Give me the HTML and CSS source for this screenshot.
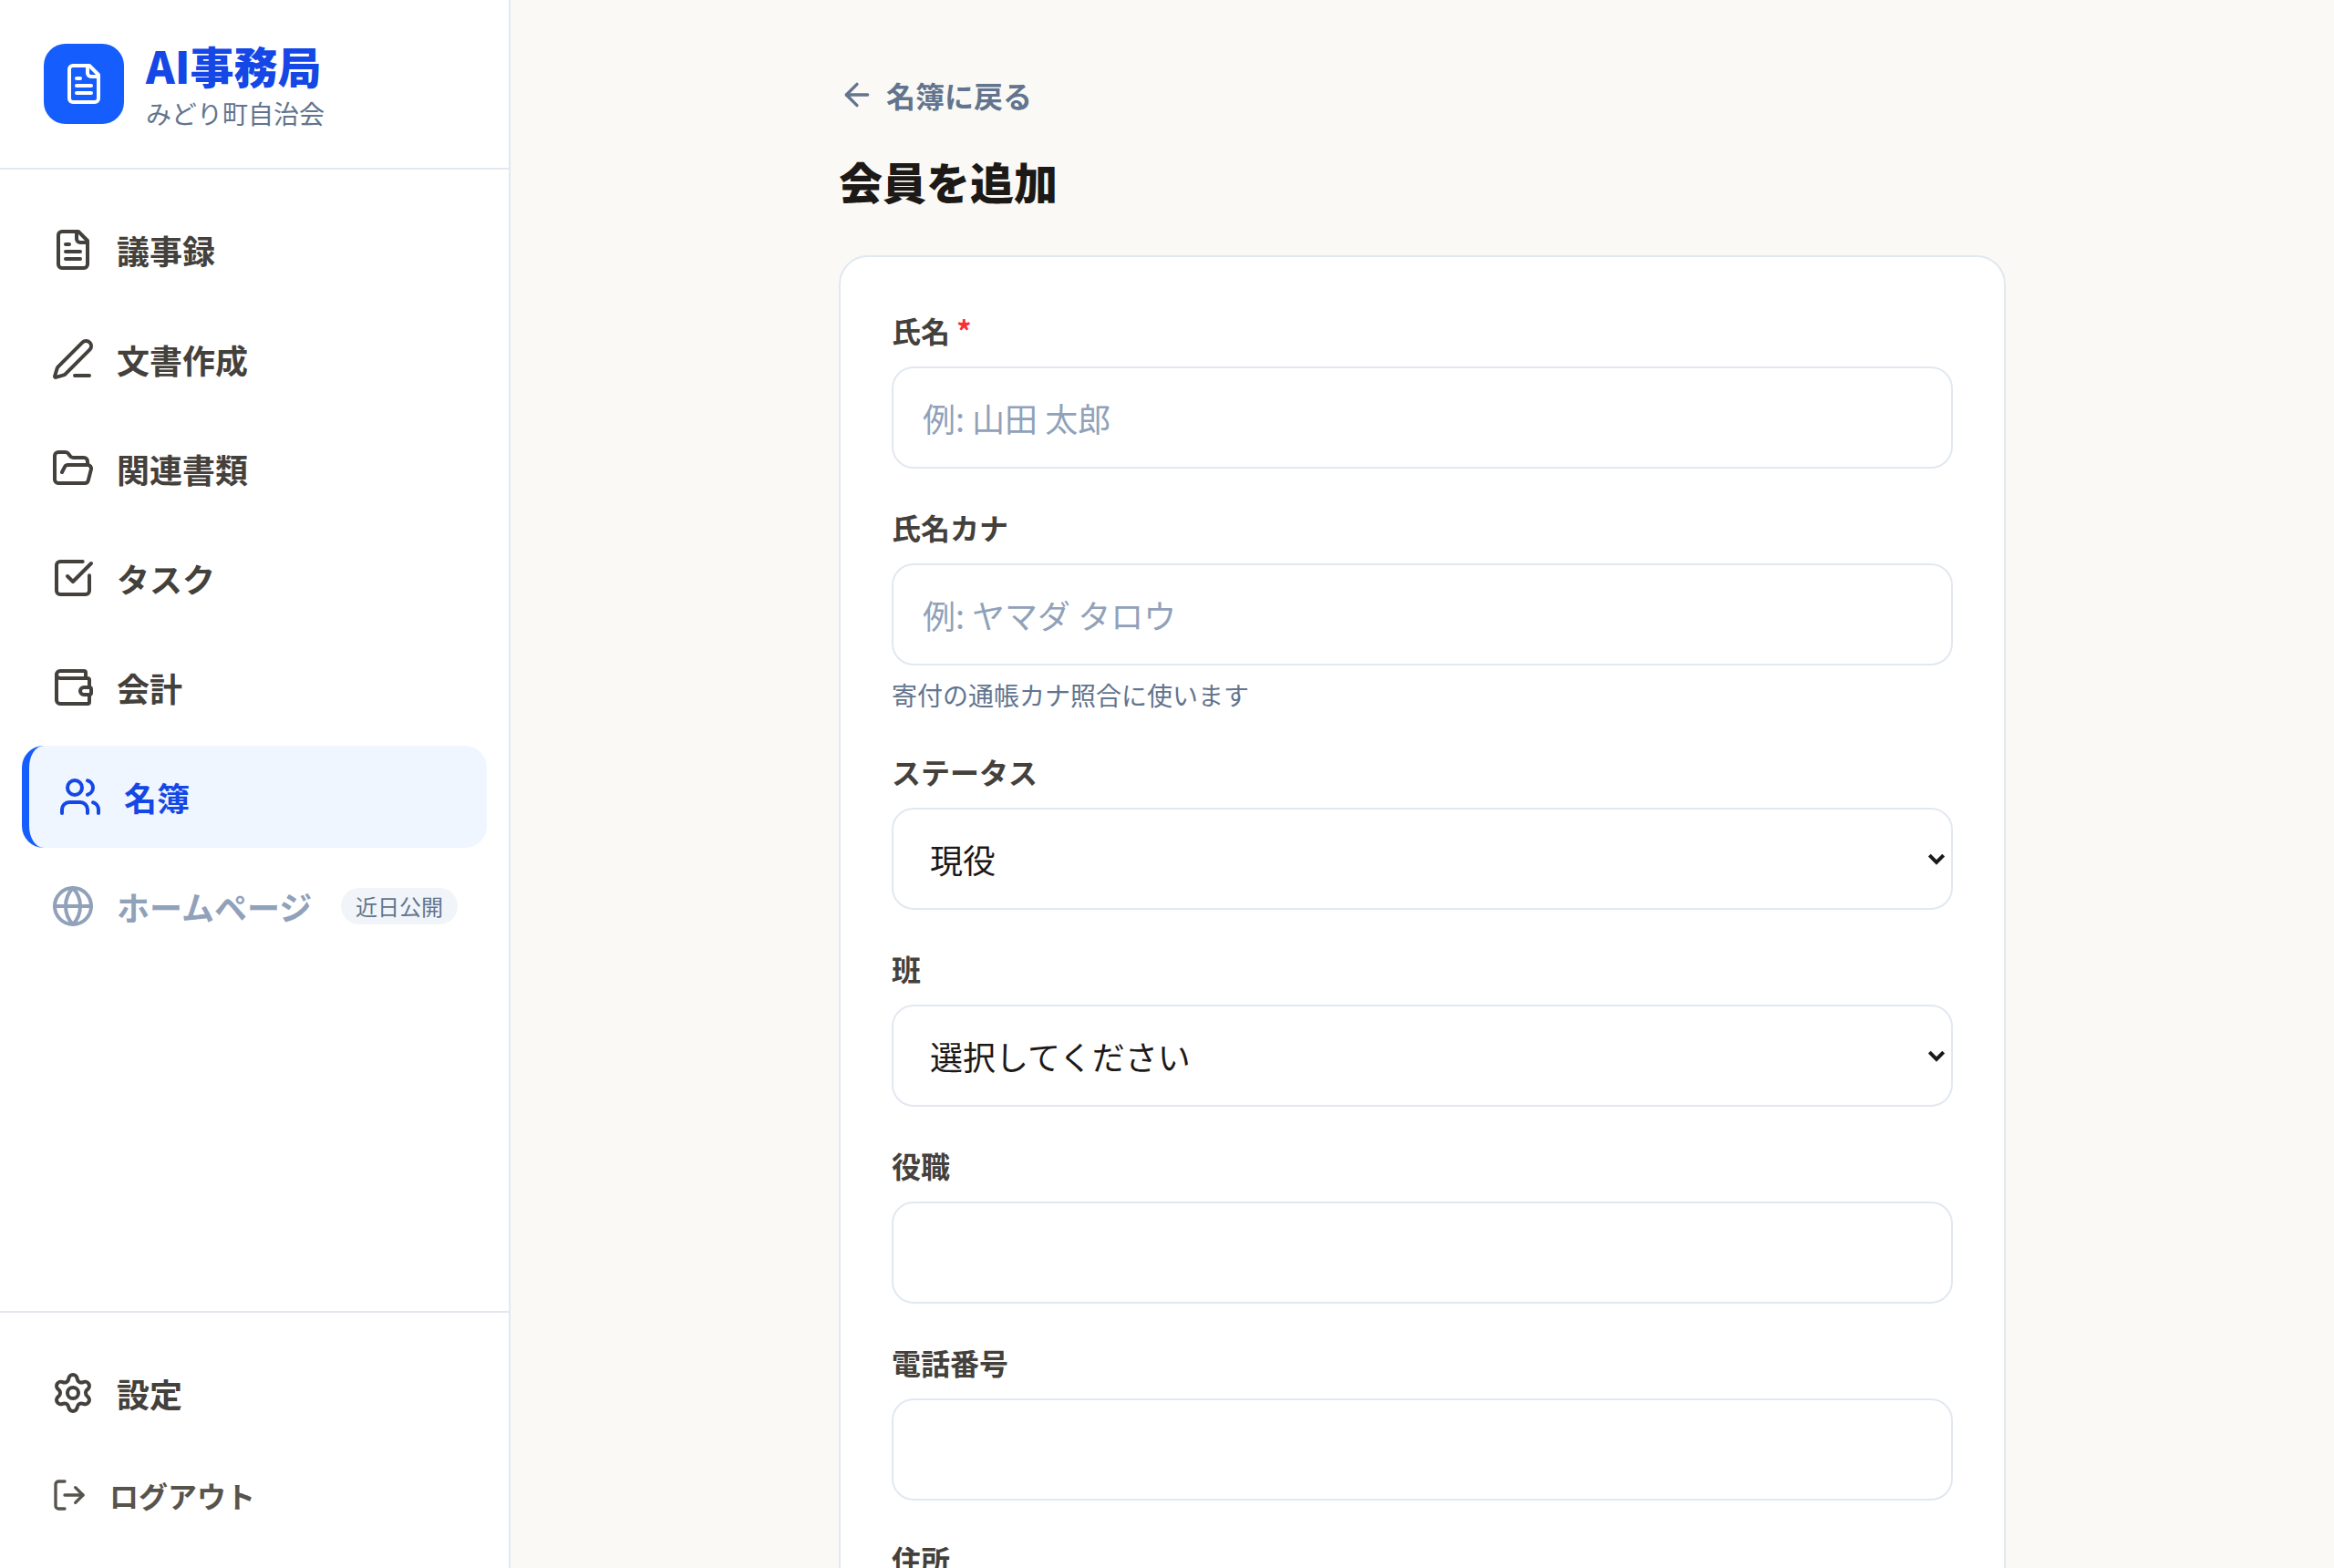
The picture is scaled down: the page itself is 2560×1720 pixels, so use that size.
FILE: index.html
```
<!DOCTYPE html>
<html lang="ja">

<head>
    <meta charset="UTF-8">
    <meta name="viewport" content="width=device-width, initial-scale=1.0">
    <title>会員を追加</title>
    <link rel="stylesheet" href="styles.css">
</head>

<body>
    <aside class="sidebar">
        <div class="brand">
            <div class="brand-logo">
                <svg class="icon" viewBox="0 0 24 24"><path d="M15 2H6a2 2 0 0 0-2 2v16a2 2 0 0 0 2 2h12a2 2 0 0 0 2-2V7Z"/><path d="M14 2v4a2 2 0 0 0 2 2h4"/><path d="M10 9H8"/><path d="M16 13H8"/><path d="M16 17H8"/></svg>
            </div>
            <div class="brand-text">
                <p class="brand-name">AI事務局</p>
                <p class="brand-org">みどり町自治会</p>
            </div>
        </div>

        <nav class="nav">
            <a class="nav-item">
                <svg class="icon" viewBox="0 0 24 24"><path d="M15 2H6a2 2 0 0 0-2 2v16a2 2 0 0 0 2 2h12a2 2 0 0 0 2-2V7Z"/><path d="M14 2v4a2 2 0 0 0 2 2h4"/><path d="M10 9H8"/><path d="M16 13H8"/><path d="M16 17H8"/></svg>
                <span>議事録</span>
            </a>
            <a class="nav-item">
                <svg class="icon" viewBox="0 0 24 24"><path d="M13 21h8"/><path d="M21.174 6.812a1 1 0 0 0-3.986-3.987L3.842 16.174a2 2 0 0 0-.5.83l-1.321 4.352a.5.5 0 0 0 .623.622l4.353-1.32a2 2 0 0 0 .83-.497z"/></svg>
                <span>文書作成</span>
            </a>
            <a class="nav-item">
                <svg class="icon" viewBox="0 0 24 24"><path d="m6 14 1.5-2.9A2 2 0 0 1 9.24 10H20a2 2 0 0 1 1.94 2.5l-1.54 6a2 2 0 0 1-1.95 1.5H4a2 2 0 0 1-2-2V5a2 2 0 0 1 2-2h3.9a2 2 0 0 1 1.69.9l.81 1.2a2 2 0 0 0 1.67.9H18a2 2 0 0 1 2 2v2"/></svg>
                <span>関連書類</span>
            </a>
            <a class="nav-item">
                <svg class="icon" viewBox="0 0 24 24"><path d="M21 10.656V19a2 2 0 0 1-2 2H5a2 2 0 0 1-2-2V5a2 2 0 0 1 2-2h12.344"/><path d="m9 11 3 3L22 4"/></svg>
                <span>タスク</span>
            </a>
            <a class="nav-item">
                <svg class="icon" viewBox="0 0 24 24"><path d="M19 7V4a1 1 0 0 0-1-1H5a2 2 0 0 0 0 4h15a1 1 0 0 1 1 1v4h-3a2 2 0 0 0 0 4h3a1 1 0 0 0 1-1v-2a1 1 0 0 0-1-1"/><path d="M3 5v14a2 2 0 0 0 2 2h15a1 1 0 0 0 1-1v-4"/></svg>
                <span>会計</span>
            </a>
            <a class="nav-item active">
                <svg class="icon" viewBox="0 0 24 24"><path d="M16 21v-2a4 4 0 0 0-4-4H6a4 4 0 0 0-4 4v2"/><path d="M16 3.128a4 4 0 0 1 0 7.744"/><path d="M22 21v-2a4 4 0 0 0-3-3.87"/><circle cx="9" cy="7" r="4"/></svg>
                <span>名簿</span>
            </a>
            <a class="nav-item disabled">
                <svg class="icon" viewBox="0 0 24 24"><circle cx="12" cy="12" r="10"/><path d="M12 2a14.5 14.5 0 0 0 0 20 14.5 14.5 0 0 0 0-20"/><path d="M2 12h20"/></svg>
                <span>ホームページ</span>
                <span class="badge">近日公開</span>
            </a>
        </nav>

        <div class="sidebar-footer">
            <a class="nav-item">
                <svg class="icon" viewBox="0 0 24 24"><path d="M9.671 4.136a2.34 2.34 0 0 1 4.659 0 2.34 2.34 0 0 0 3.319 1.915 2.34 2.34 0 0 1 2.33 4.033 2.34 2.34 0 0 0 0 3.831 2.34 2.34 0 0 1-2.33 4.033 2.34 2.34 0 0 0-3.319 1.915 2.34 2.34 0 0 1-4.659 0 2.34 2.34 0 0 0-3.32-1.915 2.34 2.34 0 0 1-2.33-4.033 2.34 2.34 0 0 0 0-3.831A2.34 2.34 0 0 1 6.35 6.051a2.34 2.34 0 0 0 3.319-1.915"/><circle cx="12" cy="12" r="3"/></svg>
                <span>設定</span>
            </a>
            <a class="nav-item logout">
                <svg class="icon" viewBox="0 0 24 24"><path d="m16 17 5-5-5-5"/><path d="M21 12H9"/><path d="M9 21H5a2 2 0 0 1-2-2V5a2 2 0 0 1 2-2h4"/></svg>
                <span>ログアウト</span>
            </a>
        </div>
    </aside>

    <main class="main">
        <div class="container">
            <a class="back-link">
                <svg class="icon" viewBox="0 0 24 24"><path d="m12 19-7-7 7-7"/><path d="M19 12H5"/></svg>
                <span>名簿に戻る</span>
            </a>
            <h1>会員を追加</h1>

            <form class="card">
                <div class="field">
                    <label for="name">氏名 <span class="required">*</span></label>
                    <input type="text" id="name" placeholder="例: 山田 太郎">
                </div>
                <div class="field">
                    <label for="kana">氏名カナ</label>
                    <input type="text" id="kana" placeholder="例: ヤマダ タロウ">
                    <p class="help">寄付の通帳カナ照合に使います</p>
                </div>
                <div class="field">
                    <label for="status">ステータス</label>
                    <div class="select">
                        <select id="status">
                            <option>現役</option>
                        </select>
                        <svg class="arrow" viewBox="0 0 20 14"><path d="M2.3 3.1 10 10.8l7.7-7.7"/></svg>
                    </div>
                </div>
                <div class="field">
                    <label for="group">班</label>
                    <div class="select">
                        <select id="group">
                            <option>選択してください</option>
                        </select>
                        <svg class="arrow" viewBox="0 0 20 14"><path d="M2.3 3.1 10 10.8l7.7-7.7"/></svg>
                    </div>
                </div>
                <div class="field">
                    <label for="role">役職</label>
                    <input type="text" id="role">
                </div>
                <div class="field">
                    <label for="phone">電話番号</label>
                    <input type="text" id="phone">
                </div>
                <div class="field">
                    <label for="address">住所</label>
                    <input type="text" id="address">
                </div>
            </form>
        </div>
    </main>
</body>

</html>
```
FILE: styles.css
```
* {
    box-sizing: border-box;
    margin: 0;
    padding: 0;
}

body {
    display: flex;
    height: 100vh;
    overflow: hidden;
    font-family: "Noto Sans CJK JP", sans-serif;
    font-size: 36px;
    line-height: 1.5;
    color: #1c1917;
    background-color: #faf9f5;
}

.icon {
    width: 48px;
    height: 48px;
    flex-shrink: 0;
    fill: none;
    stroke: currentColor;
    stroke-width: 2;
    stroke-linecap: round;
    stroke-linejoin: round;
}

/* sidebar */
.sidebar {
    display: flex;
    flex-direction: column;
    width: 560px;
    flex-shrink: 0;
    background-color: white;
    border-right: 2px solid #e2e8f0;
}

.brand {
    display: flex;
    align-items: center;
    gap: 24px;
    height: 186px;
    padding: 0 48px;
    border-bottom: 2px solid #e2e8f0;
}

.brand-logo {
    display: flex;
    align-items: center;
    justify-content: center;
    width: 88px;
    height: 88px;
    border-radius: 24px;
    color: white;
    background-color: #155dfc;
}

.brand-name {
    font-size: 48px;
    font-weight: 800;
    line-height: 64px;
    color: #1447e6;
}

.brand-org {
    font-size: 28px;
    line-height: 42px;
    color: #62748e;
}

.nav {
    display: flex;
    flex-direction: column;
    flex: 1;
    gap: 8px;
    padding: 32px 24px;
}

.nav-item {
    display: flex;
    align-items: center;
    gap: 24px;
    height: 112px;
    padding: 0 32px;
    border-radius: 24px;
    font-weight: 600;
    color: #44403b;
}

.nav-item.active {
    color: #1447e6;
    background-color: #eff6ff;
    border-left: 8px solid #155dfc;
}

.nav-item.disabled {
    color: #90a1b9;
}

.badge {
    margin-left: auto;
    padding: 0 16px;
    border-radius: 20px;
    font-size: 24px;
    font-weight: 400;
    line-height: 40px;
    color: #62748e;
    background-color: #f1f5f9;
}

.sidebar-footer {
    display: flex;
    flex-direction: column;
    gap: 8px;
    padding: 32px 24px;
    border-top: 2px solid #e2e8f0;
}

.logout {
    height: 96px;
    font-size: 32px;
    color: #57534d;
}

.logout .icon,
.back-link .icon {
    width: 40px;
    height: 40px;
}

/* main */
.main {
    flex: 1;
    padding-top: 64px;
}

.container {
    width: 1280px;
    margin: 0 auto;
}

.back-link {
    display: inline-flex;
    align-items: center;
    gap: 12px;
    height: 80px;
    font-size: 32px;
    font-weight: 600;
    color: #62748e;
    vertical-align: top;
}

h1 {
    margin: 24px 0 52px;
    font-size: 48px;
    font-weight: 800;
    line-height: 60px;
}

.card {
    display: flex;
    flex-direction: column;
    gap: 40px;
    padding: 56px;
    border: 2px solid #e2e8f0;
    border-radius: 32px;
    background-color: white;
}

label {
    display: block;
    margin-bottom: 16px;
    font-size: 32px;
    font-weight: 600;
    line-height: 48px;
    color: #44403b;
}

.required {
    color: #fb2c36;
}

input,
select {
    display: block;
    width: 100%;
    height: 112px;
    padding: 0 32px;
    border: 2px solid #e2e8f0;
    border-radius: 24px;
    font: inherit;
    color: #1c1917;
    background-color: white;
}

input::placeholder {
    color: #90a1b9;
}

/* select and its arrow share one grid cell */
.select {
    display: grid;
    align-items: center;
}

.select select,
.select .arrow {
    grid-area: 1 / 1;
}

select {
    padding: 0 40px;
    appearance: none;
}

.arrow {
    justify-self: end;
    width: 20px;
    height: 14px;
    margin-right: 8px;
    fill: none;
    stroke: #1c1917;
    stroke-width: 4;
    pointer-events: none;
}

.help {
    margin-top: 12px;
    font-size: 28px;
    line-height: 40px;
    color: #62748e;
}
```
